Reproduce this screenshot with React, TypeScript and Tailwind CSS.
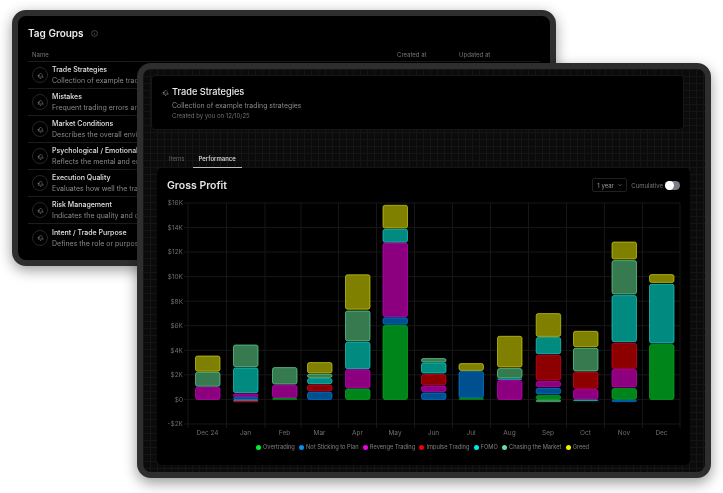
const FONT = "font-['Inter','Noto_Sans',sans-serif]";

const rows = [
  ["Trade Strategies", "Collection of example trading strategies"],
  ["Mistakes", "Frequent trading errors and bad habits"],
  ["Market Conditions", "Describes the overall environment"],
  ["Psychological / Emotional", "Reflects the mental and emotional state"],
  ["Execution Quality", "Evaluates how well the trade was run"],
  ["Risk Management", "Indicates the quality and discipline"],
  ["Intent / Trade Purpose", "Defines the role or purpose of a trade"],
];

function TagIcon({ size = 7 }: { size?: number }) {
  return (
    <svg width={size} height={size} viewBox="0 0 24 24" fill="none" stroke="currentColor" strokeWidth="1.7" strokeLinecap="round" strokeLinejoin="round">
      <path d="M6 16c1.5-1.5 1.5-3 1.5-6a5 5 0 0 1 9.5-2c.6 1.6.2 5 2.5 8" />
      <path d="M4 17.5h17" />
      <path d="M10 21a2.5 2.5 0 0 0 4.5 0" />
      <circle cx="4" cy="12" r="1" />
    </svg>
  );
}

const C = {
  green: ["#00851a", "#00b020"],
  blue: ["#005090", "#0080e0"],
  magenta: ["#8c0080", "#d000c8"],
  red: ["#8c0000", "#e00030"],
  cyan: ["#008a80", "#20d0c8"],
  mint: ["#387a50", "#60d898"],
  yellow: ["#808000", "#d0d010"],
};
type K = keyof typeof C;

const months: { label: string; lx: number; x: number; segs: [K, number, number][] }[] = [
  { label: "Dec 24", lx: 207.5, x: 195, segs: [["yellow", 355.7, 371.5], ["mint", 372, 386.5], ["magenta", 387, 399.7]] },
  { label: "Jan", lx: 245.5, x: 233, segs: [["mint", 344.7, 367], ["cyan", 367.7, 393], ["magenta", 393.7, 397], ["blue", 397, 399.7], ["cyan", 399.7, 400.6], ["red", 400.6, 402.3]] },
  { label: "Feb", lx: 284.5, x: 272, segs: [["mint", 367.3, 384.4], ["magenta", 385, 398], ["green", 398, 399.7]] },
  { label: "Mar", lx: 319.5, x: 307, segs: [["yellow", 362.3, 373.3], ["mint", 374, 377.7], ["cyan", 378.3, 384], ["red", 384.7, 391.3], ["blue", 392, 399.7]] },
  { label: "Apr", lx: 357.5, x: 345, segs: [["yellow", 274.5, 309.5], ["mint", 310.7, 341.2], ["cyan", 342, 369], ["magenta", 369.4, 388.3], ["green", 388.7, 399.7]] },
  { label: "May", lx: 395, x: 382.5, segs: [["yellow", 205, 228.3], ["cyan", 229, 242.5], ["magenta", 242.8, 317], ["blue", 317.5, 324.5], ["green", 325.3, 399.7]] },
  { label: "Jun", lx: 433.5, x: 421, segs: [["mint", 358.3, 362.3], ["cyan", 362.7, 373.3], ["red", 374.3, 385], ["magenta", 385.7, 392], ["blue", 392.7, 399.7]] },
  { label: "Jul", lx: 471, x: 458.5, segs: [["yellow", 363.3, 370.7], ["blue", 371.3, 398], ["green", 398, 399.7]] },
  { label: "Aug", lx: 509.5, x: 497, segs: [["yellow", 336, 367.3], ["mint", 368.3, 378.3], ["cyan", 378.5, 379.8], ["magenta", 380.3, 399.7]] },
  { label: "Sep", lx: 548, x: 535.7, segs: [["yellow", 313.3, 336.7], ["cyan", 337.3, 354], ["red", 355, 380.3], ["magenta", 381.3, 387], ["blue", 388, 394.3], ["green", 395.3, 399.5], ["mint", 399.7, 402]] },
  { label: "Oct", lx: 585.5, x: 573, segs: [["yellow", 331, 347], ["mint", 348, 371.3], ["red", 372, 388.7], ["magenta", 389.3, 399.4], ["cyan", 399.7, 401]] },
  { label: "Nov", lx: 624, x: 611.5, segs: [["yellow", 241.7, 259.3], ["mint", 260.3, 294.3], ["cyan", 295.3, 342], ["red", 343, 368.7], ["magenta", 369.3, 387.3], ["green", 388.3, 399.5], ["blue", 399.7, 402]] },
  { label: "Dec", lx: 661.5, x: 649, segs: [["yellow", 274.3, 282.7], ["cyan", 284, 343.3], ["green", 344.3, 399.7]] },
];

const vLines = [188, 226.5, 265, 301, 338.5, 376.5, 414.5, 452.5, 490.5, 528.5, 566.5, 604.5, 642.5, 680];
const yTicks = ["$16K", "$14K", "$12K", "$10K", "$8K", "$6K", "$4K", "$2K", "$0", "-$2K"];

const OX = 157;
const OY = 195;

function Chart() {
  return (
    <svg width={533} height={246} viewBox={`${OX} ${OY} 533 246`} className="block shrink-0" style={{ fontFamily: "Inter, sans-serif" }}>
      {yTicks.map((t, i) => {
        const y = 203 + i * 24.55;
        return (
          <g key={t}>
            <line x1={184} x2={680} y1={y} y2={y} stroke="#171717" strokeWidth="1" />
            <text x={183} y={y + 2.3} textAnchor="end" fontSize="6.5" fill="#6e6e6e">{t}</text>
          </g>
        );
      })}
      {vLines.map((x) => (
        <line key={x} x1={x} x2={x} y1={203} y2={428} stroke="#161616" strokeWidth="1" />
      ))}
      {months.map((m) => (
        <g key={m.label}>
          {m.segs.map(([k, a, b], i) => {
            const h = b - a;
            return (
              <rect key={i} x={m.x + 0.5} y={a + 0.3} width={24.5} height={Math.max(h - 0.6, 0.4)} rx={Math.min(2, h / 2.5)} fill={C[k][0]} stroke={C[k][1]} strokeWidth={h < 3 ? 0.5 : 0.7} />
            );
          })}
          <text x={m.lx} y={435} textAnchor="middle" fontSize="6.5" fill="#6e6e6e">{m.label}</text>
        </g>
      ))}
    </svg>
  );
}

const legend: [string, string][] = [
  ["Overtrading", "#00f030"],
  ["Not Sticking to Plan", "#0090f0"],
  ["Revenge Trading", "#f000e8"],
  ["Impulse Trading", "#f00000"],
  ["FOMO", "#00e8e8"],
  ["Chasing the Market", "#60e0a0"],
  ["Greed", "#f0f000"],
];

export default function App() {
  return (
    <div className={`relative w-[723px] h-[493px] bg-white overflow-hidden blur-[0.4px] ${FONT}`}>
      {/* Back window */}
      <div className="absolute left-[12px] top-[10px] w-[544px] h-[256px] rounded-[14px] bg-black border-[6px] border-[#2e2e2e] shadow-[0_4px_14px_rgba(0,0,0,0.4)] px-[10px] overflow-hidden">
        <div className="flex items-center gap-[7px] h-[34px]">
          <span className="text-[10px] font-semibold text-[#ececec] leading-none">Tag Groups</span>
          <svg width="7" height="7" viewBox="0 0 24 24" fill="none" stroke="#777" strokeWidth="2"><circle cx="12" cy="12" r="10" /><path d="M12 11v6M12 7v.5" /></svg>
        </div>
        <div className="flex items-center h-[8px] pl-[4px] text-[6px] text-[#777]">
          <span className="w-[365px]">Name</span>
          <span className="w-[62px]">Created at</span>
          <span>Updated at</span>
        </div>
        <div className="mt-[3px] border-t border-[#1c1c1c]">
          {rows.map(([title, desc]) => (
            <div key={title} className="flex items-center h-[27px] border-b border-[#1c1c1c] last:border-b-0 pl-[4px] gap-[4px]">
              <div className="flex items-center justify-center w-[16px] h-[16px] rounded-full border border-[#262626] text-[#999]">
                <TagIcon />
              </div>
              <div className="flex flex-col gap-[3px] pt-[1px] w-[85px] overflow-hidden whitespace-nowrap">
                <span className="text-[7px] leading-[8px] font-medium text-[#e0e0e0]">{title}</span>
                <span className="text-[7px] leading-[8px] text-[#8a8a8a]">{desc}</span>
              </div>
            </div>
          ))}
        </div>
      </div>

      {/* Front window */}
      <div className="absolute left-[137px] top-[63px] w-[574px] h-[415px] rounded-[14px] border-[6px] border-[#2e2e2e] shadow-[0_5px_14px_rgba(0,0,0,0.4)] bg-[#0b0b0b] bg-[linear-gradient(#151515_1px,transparent_1px),linear-gradient(90deg,#151515_1px,transparent_1px)] bg-[size:7px_7px] overflow-hidden flex flex-col">
        <div className="mt-[6px] ml-[8px] w-[533px] h-[55px] rounded-[4px] bg-black border border-[#161616] pl-[10px] pt-[9px] flex flex-col shrink-0">
          <div className="flex items-center gap-[3px] text-[#aaa]">
            <TagIcon size={7} />
            <span className="text-[9.2px] leading-[14px] font-medium text-[#ececec]">Trade Strategies</span>
          </div>
          <span className="ml-[10px] mt-[2px] text-[6.9px] leading-[10px] text-[#8a8a8a]">Collection of example trading strategies</span>
          <span className="ml-[10px] mt-[1px] text-[6px] leading-[8px] text-[#6e6e6e]">Created by you on 12/10/25</span>
        </div>
        <div className="flex ml-[14px] mt-[20px] h-[18px] shrink-0 text-[6px] items-center">
          <span className="pl-[12px] pr-[8px] pb-[1px] text-[#666]">Items</span>
          <span className="h-full flex items-center px-[6px] pb-[1px] text-[#e0e0e0] font-medium border-b border-[#bbb]">Performance</span>
        </div>
        <div className="ml-[14px] w-[533px] h-[297px] rounded-[5px] bg-black flex flex-col shrink-0">
          <div className="flex items-center justify-between h-[27px] pl-[10px] pr-[10px] pt-[7px] shrink-0">
            <span className="text-[10.5px] font-semibold text-[#e4e4e4] leading-none mt-[2px]">Gross Profit</span>
            <div className="flex items-center">
              <div className="flex items-center justify-between w-[35px] h-[14px] rounded-[2px] border border-[#202020] pl-[4px] pr-[3px] text-[6px] text-[#9a9a9a]">
                <span>1 year</span>
                <svg width="6" height="6" viewBox="0 0 24 24" fill="none" stroke="#8a8a8a" strokeWidth="2.5"><path d="m6 9 6 6 6-6" /></svg>
              </div>
              <span className="ml-[4px] text-[6px] text-[#777]">Cumulative</span>
              <div className="ml-[2px] w-[15px] h-[9px] rounded-full bg-[#7c7c88] flex items-center">
                <div className="w-[9px] h-[9px] rounded-full bg-white" />
              </div>
            </div>
          </div>
          <Chart />
          <div className="flex justify-center items-center gap-[4.2px] pr-[2px] mt-[2px] text-[5.7px] leading-[8px] text-[#808080]">
            {legend.map(([name, color]) => (
              <div key={name} className="flex items-center gap-[2px]">
                <span className="w-[5px] h-[5px] rounded-full" style={{ backgroundColor: color }} />
                <span>{name}</span>
              </div>
            ))}
          </div>
        </div>
      </div>
    </div>
  );
}
